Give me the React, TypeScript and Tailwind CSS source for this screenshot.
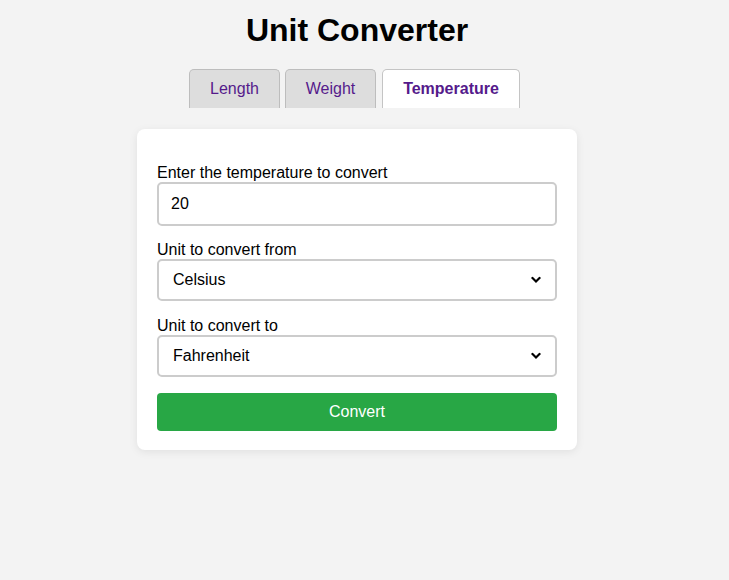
import React from "react";

function Chevron() {
  return (
    <svg
      width="10"
      height="7"
      viewBox="0 0 10 7"
      className="pointer-events-none absolute right-[16px] top-1/2 -translate-y-1/2"
    >
      <path d="M1.5 1.5 L5 5 L8.5 1.5" fill="none" stroke="#000" strokeWidth="2.2" strokeLinecap="square" />
    </svg>
  );
}

function SelectBox({ value, options }: { value: string; options: string[] }) {
  return (
    <div className="relative">
      <select
        defaultValue={value}
        className="block h-[42px] w-full appearance-none rounded-[5px] border-2 border-[#cccccc] bg-white pl-[14px] pr-8 text-[16px] text-black outline-none"
      >
        {options.map((o) => (
          <option key={o}>{o}</option>
        ))}
      </select>
      <Chevron />
    </div>
  );
}

export default function App() {
  const units = ["Celsius", "Fahrenheit", "Kelvin"];
  return (
    <div
      className="min-h-[580px] w-full bg-[#f3f3f3] pr-[15px] text-black"
      style={{ fontFamily: '"Liberation Sans", Arial, sans-serif' }}
    >
      <h1 className="pt-[12px] text-center text-[32px] font-bold leading-[37px]">Unit Converter</h1>
      <div className="mt-[20px] flex justify-center">
        <div className="flex">
          <button className="mr-[5px] h-[39px] w-[91px] rounded-t-[5px] border border-b-0 border-[#bdbdbd] bg-[#dddddd] text-[16px] text-[#551a8b]">
            Length
          </button>
          <button className="mr-[6px] h-[39px] w-[91px] rounded-t-[5px] border border-b-0 border-[#bdbdbd] bg-[#dddddd] text-[16px] text-[#551a8b]">
            Weight
          </button>
          <button className="mr-[5px] h-[39px] w-[138px] rounded-t-[5px] border border-b-0 border-[#c4c4c4] bg-white text-[16px] font-bold text-[#551a8b]">
            Temperature
          </button>
        </div>
      </div>
      <div className="mt-[21px] flex justify-center">
        <div className="w-[440px] rounded-[8px] bg-white px-5 pb-[19px] pt-[34px] shadow-[0_2px_8px_rgba(0,0,0,0.08)]">
          <label className="block text-[16px] leading-[19px]">Enter the temperature to convert</label>
          <input
            defaultValue="20"
            className="mb-[14px] block h-[44px] w-full rounded-[5px] border-2 border-[#cccccc] bg-white px-3 text-[16px] text-black outline-none"
          />
          <label className="block text-[16px] leading-[19px]">Unit to convert from</label>
          <div className="mb-[15px]">
            <SelectBox value="Celsius" options={units} />
          </div>
          <label className="block text-[16px] leading-[19px]">Unit to convert to</label>
          <div className="mb-[16px]">
            <SelectBox value="Fahrenheit" options={units} />
          </div>
          <button className="block h-[38px] w-full rounded-[4px] bg-[#28a745] text-[16px] text-white">
            Convert
          </button>
        </div>
      </div>
    </div>
  );
}
